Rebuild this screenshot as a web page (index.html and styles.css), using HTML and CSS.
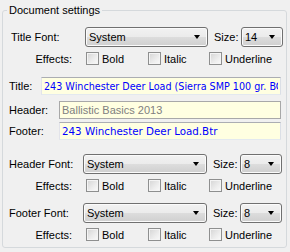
FILE: index.html
```html
<!DOCTYPE html>
<html lang="en">

<head>
    <meta charset="UTF-8">
    <meta name="viewport" content="width=device-width, initial-scale=1.0">
    <title>Document settings</title>
    <link rel="stylesheet" href="styles.css">
</head>

<body>
    <fieldset class="doc-settings">
        <legend>Document settings</legend>

        <!-- Title font -->
        <div class="font-row font-row-title">
            <span class="font-label">Title Font:</span>
            <div class="combo combo-font"><span>System</span><i class="arrow"></i></div>
            <span class="size-label">Size:</span>
            <div class="combo combo-size"><span>14</span><i class="arrow"></i></div>
        </div>
        <div class="effects-row">
            <span class="effects-label">Effects:</span>
            <label class="check check-bold"><span class="box"></span>Bold</label>
            <label class="check check-italic"><span class="box"></span>Italic</label>
            <label class="check"><span class="box"></span>Underline</label>
        </div>

        <!-- Texts -->
        <div class="text-row text-row-title">
            <span class="text-label">Title:</span>
            <input class="text-field text-blue text-small" type="text" readonly value="243 Winchester Deer Load (Sierra SMP 100 gr. BC .365)">
        </div>
        <div class="text-row text-row-header">
            <span class="text-label">Header:</span>
            <input class="text-field text-gray field-dark" type="text" readonly value="Ballistic Basics 2013">
        </div>
        <div class="text-row text-row-footer">
            <span class="text-label">Footer:</span>
            <input class="text-field text-blue" type="text" readonly value="243 Winchester Deer Load.Btr">
        </div>

        <!-- Header font -->
        <div class="font-row font-row-header">
            <span class="font-label">Header Font:</span>
            <div class="combo combo-font"><span>System</span><i class="arrow"></i></div>
            <span class="size-label">Size:</span>
            <div class="combo combo-size"><span>8</span><i class="arrow"></i></div>
        </div>
        <div class="effects-row">
            <span class="effects-label">Effects:</span>
            <label class="check check-bold"><span class="box"></span>Bold</label>
            <label class="check check-italic"><span class="box"></span>Italic</label>
            <label class="check"><span class="box"></span>Underline</label>
        </div>

        <!-- Footer font -->
        <div class="font-row font-row-footer">
            <span class="font-label">Footer Font:</span>
            <div class="combo combo-font"><span>System</span><i class="arrow"></i></div>
            <span class="size-label">Size:</span>
            <div class="combo combo-size"><span>8</span><i class="arrow"></i></div>
        </div>
        <div class="effects-row">
            <span class="effects-label">Effects:</span>
            <label class="check check-bold"><span class="box"></span>Bold</label>
            <label class="check check-italic"><span class="box"></span>Italic</label>
            <label class="check"><span class="box"></span>Underline</label>
        </div>
    </fieldset>
</body>

</html>
```

FILE: styles.css
```css
body {
    margin: 0;
    background: #f0f0f0;
    font: 11px "Liberation Sans", Arial, sans-serif;
    color: #000;
}

.doc-settings {
    margin: 4px 3px 0 2px;
    padding: 0 0 6px 0;
    border: 1px solid #d5d9dc;
    border-radius: 3px;
}

.doc-settings legend {
    margin-left: 4px;
    padding: 0 2px;
    line-height: 13px;
    font-size: 11px;
}

/* font rows: label, combo, size */
.font-row {
    display: flex;
    align-items: center;
    height: 20px;
    padding-left: 6px;
}

.font-row-title {
    margin-top: 10px;
    padding-left: 8px;
}

.font-row-header {
    margin-top: 14px;
}

.font-row-footer {
    margin-top: 11px;
}

.font-label {
    width: 74px;
}

.combo {
    position: relative;
    box-sizing: border-box;
    height: 20px;
    display: flex;
    align-items: center;
    padding-left: 3px;
    border: 1px solid #707070;
    border-radius: 3px;
    background: linear-gradient(#f2f2f2 0%, #ebebeb 50%, #dddddd 50%, #cfcfcf 100%);
    box-shadow: inset 0 0 0 1px #fbfbfb;
}

.combo-font {
    width: 124px;
}

.font-row-title .combo-font {
    width: 123px;
}

.combo-size {
    width: 42px;
}

.size-label {
    width: 33px;
    padding-left: 6px;
    box-sizing: border-box;
}

.arrow {
    position: absolute;
    right: 7px;
    top: 7px;
    width: 0;
    height: 0;
    border-left: 3.5px solid transparent;
    border-right: 3.5px solid transparent;
    border-top: 4px solid #000;
}

/* effects row */
.effects-row {
    display: flex;
    align-items: center;
    height: 13px;
    margin-top: 5px;
}

.effects-label {
    width: 69px;
    text-align: right;
    margin-right: 14px;
}

.check {
    display: flex;
    align-items: center;
}

.check-bold {
    width: 62px;
}

.check-italic {
    width: 61px;
}

.box {
    box-sizing: border-box;
    width: 13px;
    height: 13px;
    margin-right: 3px;
    border: 1px solid #8e8f8f;
    background: linear-gradient(135deg, #d4d4d4 0%, #ededed 60%, #fafafa 100%);
    box-shadow: inset 0 0 0 1px #f4f4f4;
}

/* text rows */
.text-row {
    display: flex;
    align-items: center;
    margin-right: 5px;
    padding-left: 6px;
}

.text-row-title {
    margin-top: 12px;
}

.text-row-header {
    margin-top: 6px;
}

.text-row-footer {
    margin-top: 3px;
}

.text-label {
    width: 50px;
}

.text-row-title .text-label {
    width: 32px;
}

.text-field {
    flex: 1;
    min-width: 0;
    box-sizing: border-box;
    height: 18px;
    margin: 0;
    padding: 0 2px;
    border: 1px solid;
    border-color: #abadb3 #dbdfe6 #e3e9ef #e2e3ea;
    background: #ffffe1;
    font: 11px "Liberation Sans", Arial, sans-serif;
    outline: none;
}

.field-dark {
    border-color: #a8a8a8;
}

.text-blue {
    color: #0000ff;
    font: 10.3px "DejaVu Sans", Verdana, sans-serif;
}

.text-blue.text-small {
    font-size: 9.6px;
}

.text-gray {
    color: #808080;
}
```
